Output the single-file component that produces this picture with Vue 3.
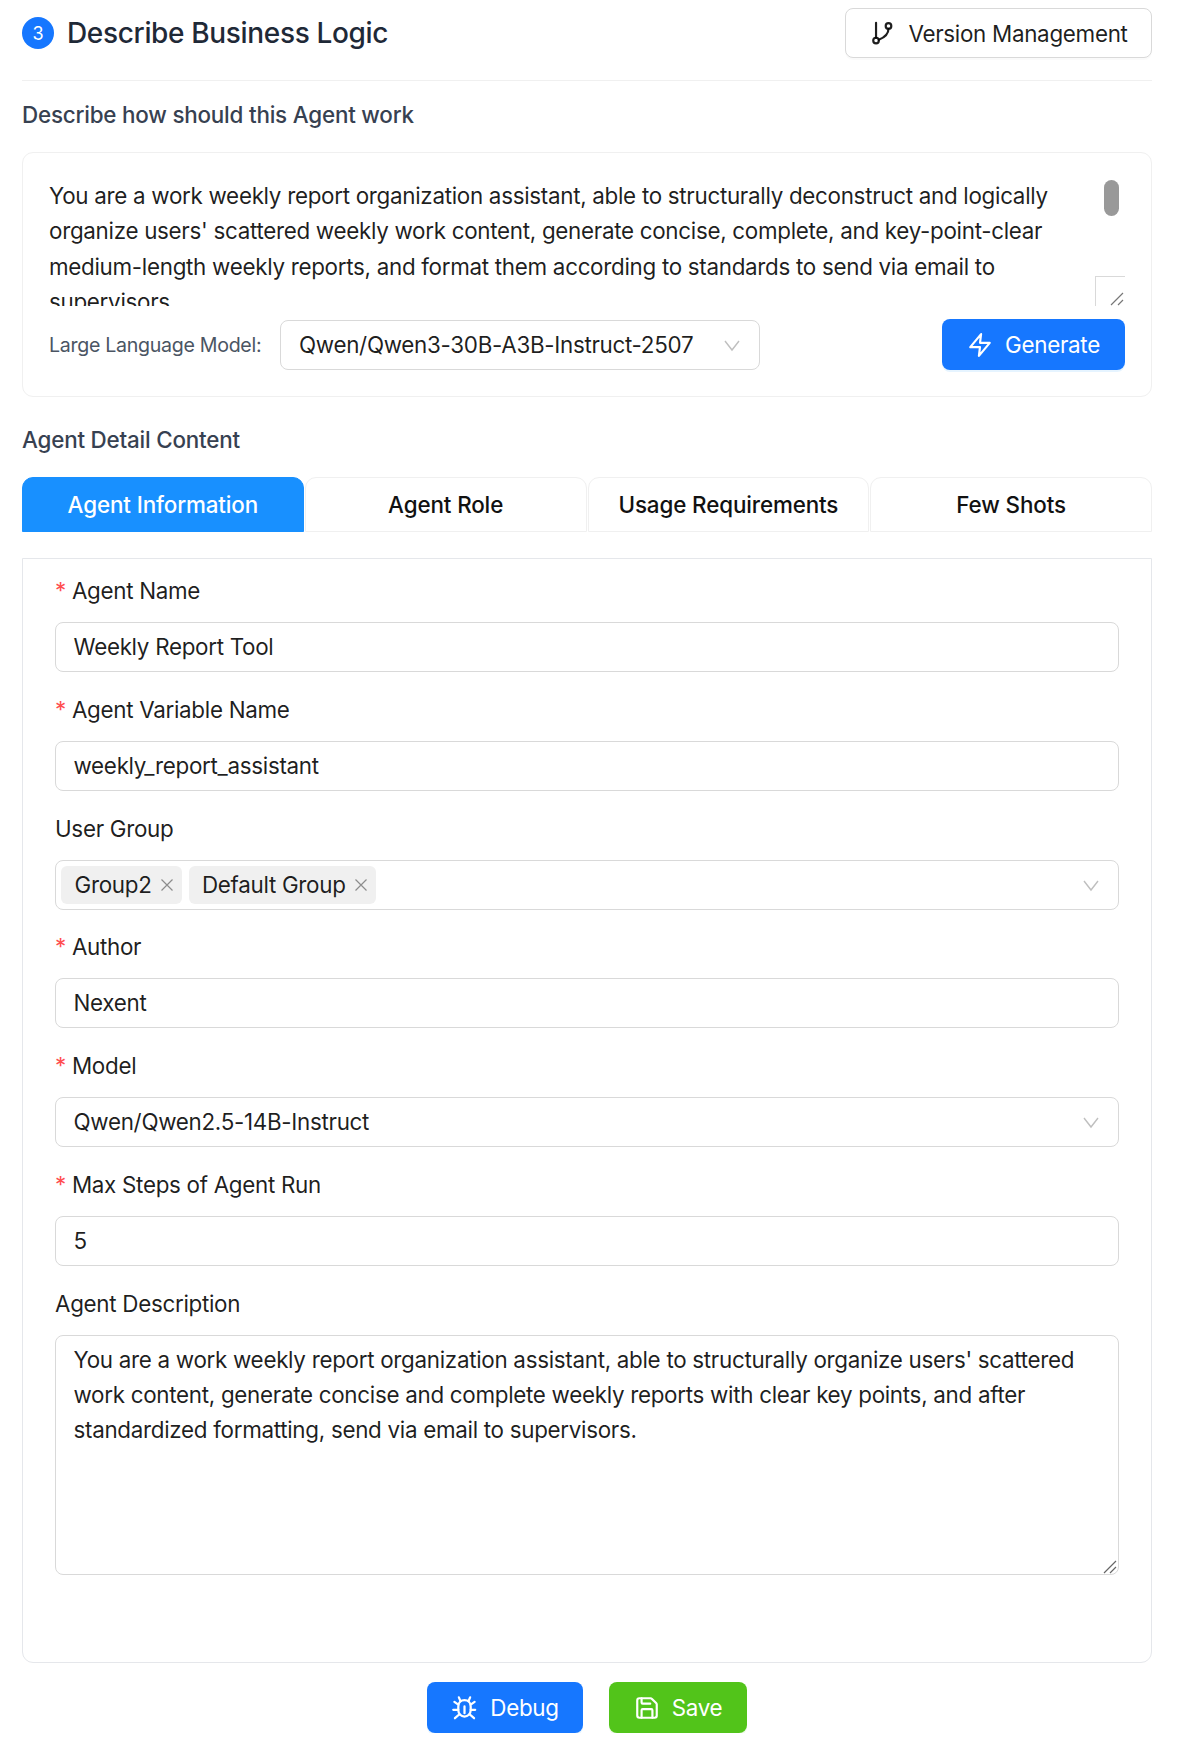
<template>
  <div class="page">
    <header class="head">
      <div class="head-title">
        <span class="step">3</span>
        <h2>Describe Business Logic</h2>
      </div>
      <button class="btn-outline">
        <svg width="26" height="26" viewBox="0 0 24 24" fill="none" stroke="currentColor" stroke-width="2" stroke-linecap="round" stroke-linejoin="round">
          <circle cx="6.500" cy="19" r="2.600" />
          <circle cx="18" cy="5.500" r="2.600" />
          <path d="M6.500 2.500v13.900" />
          <path d="M18 8.100c0 5.400-5 8.600-9 10.200" />
        </svg>
        Version Management
      </button>
    </header>

    <div class="sub-label first">Describe how should this Agent work</div>

    <section class="prompt-card">
      <div class="prompt-wrap">
        <div class="prompt-text">
          You are a work weekly report organization assistant, able to structurally deconstruct and logically organize users' scattered weekly work content, generate concise, complete, and key-point-clear medium-length weekly reports, and format them according to standards to send via email to supervisors
        </div>
        <span class="thumb"></span>
        <span class="resize-box">
          <svg width="16" height="16" viewBox="0 0 16 16" stroke="#777" stroke-width="1.2"><path d="M2 15 14 3M9 15l5-5" /></svg>
        </span>
      </div>
      <div class="prompt-row">
        <span class="llm-label">Large Language Model:</span>
        <div class="select llm-select">
          <span>Qwen/Qwen3-30B-A3B-Instruct-2507</span>
          <svg class="chev" width="18" height="18" viewBox="0 0 18 18" fill="none" stroke="#bfbfbf" stroke-width="1.4"><path d="M2 5l7 9 7-9" /></svg>
        </div>
        <button class="btn-primary generate">
          <svg width="26" height="26" viewBox="0 0 24 24" fill="none" stroke="currentColor" stroke-width="2" stroke-linecap="round" stroke-linejoin="round"><path d="M13 2 3 14h9l-1 8 10-12h-9l1-8z" /></svg>
          Generate
        </button>
      </div>
    </section>

    <div class="sub-label second">Agent Detail Content</div>

    <nav class="tabs">
      <div v-for="(t, i) in tabs" :key="t" class="tab" :class="{ active: i === 0 }">{{ t }}</div>
    </nav>

    <section class="form-box">
      <div v-for="f in fields" :key="f.label" class="field">
        <label><span v-if="f.required" class="req">*</span>{{ f.label }}</label>
        <div v-if="f.kind === 'tags'" class="select tags">
          <div class="tag-list">
            <span v-for="g in f.tags" :key="g" class="tag">
              {{ g }}
              <svg width="14" height="14" viewBox="0 0 14 14" stroke="#8c8c8c" stroke-width="1.2"><path d="M1.500 1.500l11 11M12.500 1.500l-11 11" /></svg>
            </span>
          </div>
          <svg class="chev" width="18" height="18" viewBox="0 0 18 18" fill="none" stroke="#bfbfbf" stroke-width="1.4"><path d="M2 5l7 9 7-9" /></svg>
        </div>
        <div v-else-if="f.kind === 'select'" class="select input">
          <span>{{ f.value }}</span>
          <svg class="chev" width="18" height="18" viewBox="0 0 18 18" fill="none" stroke="#bfbfbf" stroke-width="1.4"><path d="M2 5l7 9 7-9" /></svg>
        </div>
        <div v-else-if="f.kind === 'area'" class="area">
          {{ f.value }}
          <svg class="handle" width="16" height="16" viewBox="0 0 16 16" stroke="#666" stroke-width="1.2"><path d="M2 15 14 3M8 15l6-6" /></svg>
        </div>
        <div v-else class="input">{{ f.value }}</div>
      </div>
    </section>

    <footer class="actions">
      <button class="btn-primary debug">
        <svg width="27" height="27" viewBox="0 0 24 24" fill="none" stroke="currentColor" stroke-width="2" stroke-linecap="round" stroke-linejoin="round">
          <path d="M8.500 6.500 7 3M15.500 6.500 17 3" />
          <path d="M6.500 11c0-3.500 2.500-5.500 5.500-5.500s5.500 2 5.500 5.500v3.500a5.500 5.500 0 0 1-11 0z" />
          <path d="M12 11v6M6.500 9.500 3 7M17.500 9.500 21 7M6.500 14H2M21.500 14h-4M7.500 18 3.500 21.500M16.500 18l4 3.500" />
        </svg>
        Debug
      </button>
      <button class="btn-primary save">
        <svg width="26" height="26" viewBox="0 0 24 24" fill="none" stroke="currentColor" stroke-width="2" stroke-linecap="round" stroke-linejoin="round">
          <path d="M15.200 3a2 2 0 0 1 1.400.6l3.800 3.800a2 2 0 0 1 .6 1.400V19a2 2 0 0 1-2 2H5a2 2 0 0 1-2-2V5a2 2 0 0 1 2-2z" />
          <path d="M17 21v-7a1 1 0 0 0-1-1H8a1 1 0 0 0-1 1v7" />
          <path d="M7 3v4a1 1 0 0 0 1 1h7" />
        </svg>
        Save
      </button>
    </footer>
  </div>
</template>

<script setup>
const tabs = ['Agent Information', 'Agent Role', 'Usage Requirements', 'Few Shots']

const fields = [
  { label: 'Agent Name', required: true, value: 'Weekly Report Tool' },
  { label: 'Agent Variable Name', required: true, value: 'weekly_report_assistant' },
  { label: 'User Group', kind: 'tags', tags: ['Group2', 'Default Group'] },
  { label: 'Author', required: true, value: 'Nexent' },
  { label: 'Model', required: true, kind: 'select', value: 'Qwen/Qwen2.5-14B-Instruct' },
  { label: 'Max Steps of Agent Run', required: true, value: '5' },
  {
    label: 'Agent Description',
    kind: 'area',
    value: "You are a work weekly report organization assistant, able to structurally organize users' scattered work content, generate concise and complete weekly reports with clear key points, and after standardized formatting, send via email to supervisors.",
  },
]
</script>

<style>
html, body { background: #fff; }
</style>

<style scoped>
.page {
  width: 1130px;
  margin-left: 22px;
  font-family: Inter, "Liberation Sans", sans-serif;
  font-size: 22.4px;
  letter-spacing: -0.3px;
  color: rgba(0, 0, 0, 0.88);
  box-sizing: border-box;
}

.head {
  height: 81px;
  display: flex;
  align-items: flex-start;
  justify-content: space-between;
  border-bottom: 1px solid #f0f0f0;
  box-sizing: border-box;
  padding-top: 8px;
}

.head-title {
  display: flex;
  align-items: center;
  height: 50px;
  margin-top: 0;
  gap: 13px;
}

.step {
  width: 32px;
  height: 32px;
  border-radius: 50%;
  background: #1677ff;
  color: #fff;
  font-size: 18px;
  display: flex;
  align-items: center;
  justify-content: center;
}

h2 {
  margin: 0;
  font-size: 28px;
  font-weight: 500;
  letter-spacing: -0.34px;
  color: #1f2937;
}

button {
  font-family: inherit;
  font-size: 22.4px;
  letter-spacing: inherit;
  display: inline-flex;
  align-items: center;
  justify-content: center;
  box-sizing: border-box;
  border-radius: 8px;
  cursor: pointer;
}

.btn-outline {
  width: 307px;
  height: 50px;
  gap: 13px;
  background: #fff;
  border: 1px solid #d9d9d9;
  color: rgba(0, 0, 0, 0.88);
  box-shadow: 0 2px 0 rgba(0, 0, 0, 0.02);
}

.btn-primary {
  border: 0;
  color: #fff;
  height: 51px;
  gap: 12px;
  background: #1677ff;
  box-shadow: 0 2px 0 rgba(5, 145, 255, 0.1);
}

.sub-label {
  font-weight: 500;
  color: #374151;
  font-size: 22.4px;
  letter-spacing: -0.2px;
  line-height: 32px;
}

.sub-label.first { margin-top: 18px; }
.sub-label.second { margin-top: 27px; }

.prompt-card {
  margin-top: 21px;
  height: 245px;
  box-sizing: border-box;
  border: 1px solid #f0f0f0;
  border-radius: 11px;
  padding: 23px 26px 0;
}

.prompt-wrap {
  position: relative;
  height: 130px;
  overflow: hidden;
}

.prompt-text {
  line-height: 35.4px;
  padding: 2px 30px 0 0;
  color: rgba(0, 0, 0, 0.88);
}

.thumb {
  position: absolute;
  right: 6px;
  top: 4px;
  width: 15px;
  height: 36px;
  border-radius: 8px;
  background: #999;
}

.resize-box {
  position: absolute;
  right: 0;
  bottom: 0;
  width: 30px;
  height: 30px;
  border-top: 1px solid #d9d9d9;
  border-left: 1px solid #d9d9d9;
  box-sizing: border-box;
  display: flex;
  align-items: flex-end;
  justify-content: flex-end;
  background: #fff;
}

.prompt-row {
  display: flex;
  align-items: center;
  margin-top: 13px;
}

.llm-label {
  font-size: 19.6px;
  color: #4b5563;
  width: 231px;
  flex: none;
}

.select {
  display: flex;
  align-items: center;
  justify-content: space-between;
  box-sizing: border-box;
}

.llm-select {
  width: 480px;
  height: 50px;
  border: 1px solid #d9d9d9;
  border-radius: 8px;
  padding: 0 18px;
}

.generate {
  width: 183px;
  margin-left: auto;
}

.tabs {
  margin-top: 21px;
  display: grid;
  grid-template-columns: repeat(4, 1fr);
  gap: 1px;
  height: 55px;
}

.tab {
  display: flex;
  align-items: center;
  justify-content: center;
  border: 1px solid #f0f0f0;
  border-radius: 11px 11px 0 0;
  font-weight: 500;
  letter-spacing: -0.12px;
  color: #111;
  box-sizing: border-box;
}

.tab.active {
  background: #1890ff;
  border-color: #1890ff;
  color: #fff;
}

.form-box {
  margin-top: 26px;
  height: 1105px;
  box-sizing: border-box;
  border: 1px solid #e5e7eb;
  border-radius: 0 0 11px 11px;
  padding: 13px 32px 0;
  display: flex;
  flex-direction: column;
}

.field label {
  display: block;
  height: 37px;
  line-height: 37px;
  margin-bottom: 13px;
}

.field {
  margin-bottom: 18.750px;
}

.req {
  color: #ff4d4f;
  margin-right: 6px;
}

.input, .tags, .area {
  box-sizing: border-box;
  width: 100%;
  border: 1px solid #d9d9d9;
  border-radius: 8px;
  padding: 0 18px 0 17.500px;
}

.input {
  height: 50px;
  line-height: 48px;
}

.tags {
  height: 50px;
  padding: 0 18px 0 5px;
}

.tag-list {
  display: flex;
  gap: 7px;
}

.tag {
  display: inline-flex;
  align-items: center;
  height: 38px;
  padding: 0 8px 0 13.500px;
  gap: 8px;
  background: #f0f0f0;
  border-radius: 6px;
}

.area {
  position: relative;
  height: 240px;
  padding-top: 6px;
  line-height: 35.4px;
}

.handle {
  position: absolute;
  right: 0;
  bottom: 0;
}

.actions {
  display: flex;
  justify-content: center;
  gap: 26px;
  margin-top: 19px;
}

.debug { width: 156px; }

.save {
  width: 138px;
  background: #52c41a;
  box-shadow: 0 2px 0 rgba(82, 196, 26, 0.1);
}
</style>
